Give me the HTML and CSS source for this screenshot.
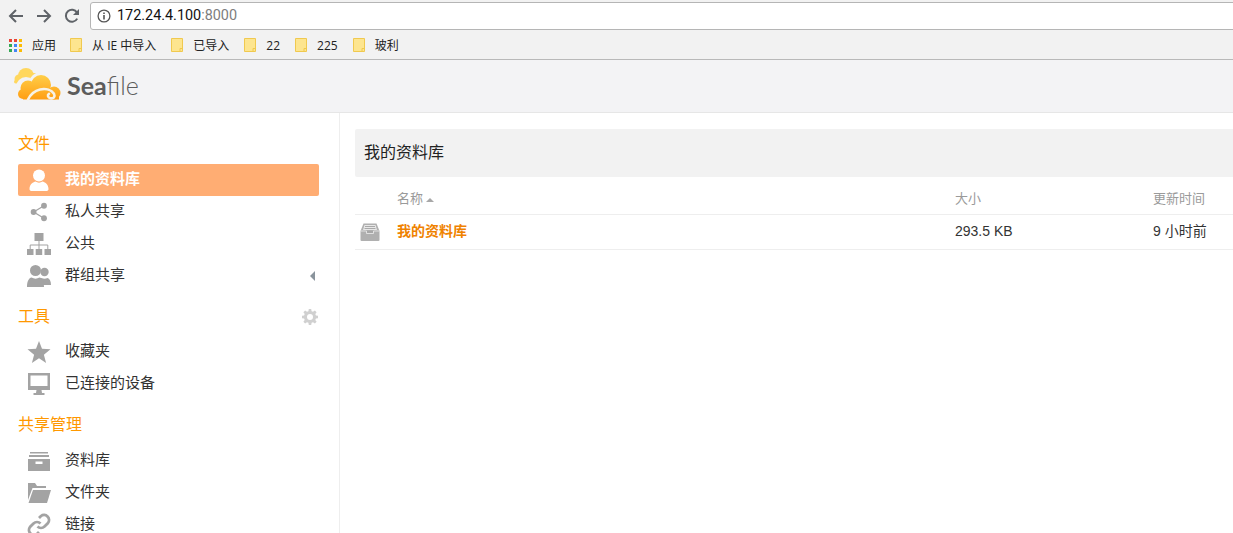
FILE: index.html
```html
<!DOCTYPE html>
<html lang="zh-CN">
<head>
<meta charset="utf-8">
<title>Seafile</title>
<link rel="stylesheet" href="styles.css">
</head>
<body>
<div class="chrome">
  <div class="toolbar">
    <svg class="tool-icon" viewBox="0 0 16 16"><path d="M15 8H2.500M8 2 2 8l6 6" fill="none" stroke="#5f6368" stroke-width="2"/></svg>
    <svg class="tool-icon" viewBox="0 0 16 16"><path d="M1 8h12.500M8 2l6 6-6 6" fill="none" stroke="#5f6368" stroke-width="2"/></svg>
    <svg class="tool-icon" viewBox="0 0 16 16"><path d="M13.200 10.600A6 6 0 1 1 13 4.600" fill="none" stroke="#5f6368" stroke-width="2"/><path d="M15 1v6H9z" fill="#5f6368"/></svg>
    <div class="omnibox">
      <svg class="info" viewBox="0 0 14 14"><circle cx="7" cy="7" r="5.900" fill="none" stroke="#555" stroke-width="1.300"/><path d="M6.200 3.400h1.600v1.500H6.200zM6.200 6h1.600v4.600H6.200z" fill="#555"/></svg>
      <span class="url">172.24.4.100<span class="port">:8000</span></span>
    </div>
  </div>
  <div class="bookmarks">
    <svg class="apps" viewBox="0 0 13 13">
      <rect x="0" y="0" width="3" height="3" fill="#ea4335"/><rect x="5" y="0" width="3" height="3" fill="#ea4335"/><rect x="10" y="0" width="3" height="3" fill="#fbbc05"/>
      <rect x="0" y="5" width="3" height="3" fill="#34a853"/><rect x="5" y="5" width="3" height="3" fill="#4285f4"/><rect x="10" y="5" width="3" height="3" fill="#fbbc05"/>
      <rect x="0" y="10" width="3" height="3" fill="#34a853"/><rect x="5" y="10" width="3" height="3" fill="#4285f4"/><rect x="10" y="10" width="3" height="3" fill="#fbbc05"/>
    </svg>
    <span class="bm apps-label">应用</span>
    <svg class="bm-file" viewBox="0 0 12 14"><path d="M.5.5h11v13H.5z" fill="#fde58f" stroke="#f0c94f"/><path d="M9 13.500v-3h2.500" fill="none" stroke="#f0c94f"/></svg>
    <span class="bm">从 IE 中导入</span>
    <svg class="bm-file" viewBox="0 0 12 14"><path d="M.5.5h11v13H.5z" fill="#fde58f" stroke="#f0c94f"/><path d="M9 13.500v-3h2.500" fill="none" stroke="#f0c94f"/></svg>
    <span class="bm">已导入</span>
    <svg class="bm-file" viewBox="0 0 12 14"><path d="M.5.5h11v13H.5z" fill="#fde58f" stroke="#f0c94f"/><path d="M9 13.500v-3h2.500" fill="none" stroke="#f0c94f"/></svg>
    <span class="bm">22</span>
    <svg class="bm-file" viewBox="0 0 12 14"><path d="M.5.5h11v13H.5z" fill="#fde58f" stroke="#f0c94f"/><path d="M9 13.500v-3h2.500" fill="none" stroke="#f0c94f"/></svg>
    <span class="bm">225</span>
    <svg class="bm-file" viewBox="0 0 12 14"><path d="M.5.5h11v13H.5z" fill="#fde58f" stroke="#f0c94f"/><path d="M9 13.500v-3h2.500" fill="none" stroke="#f0c94f"/></svg>
    <span class="bm">玻利</span>
  </div>
</div>

<header class="top">
  <svg class="logo" viewBox="0 0 52 34">
    <defs>
      <linearGradient id="cloud-a" gradientUnits="userSpaceOnUse" x1="0" y1="6" x2="0" y2="31"><stop offset="0" stop-color="#ffd04a"/><stop offset="1" stop-color="#ff9f14"/></linearGradient>
    </defs>
    <g fill="#ffd75e">
      <circle cx="13" cy="8" r="8"/><circle cx="6" cy="11" r="4.500"/><circle cx="21" cy="10" r="5"/><rect x="1" y="12" width="22" height="3.500" rx="1.700"/>
    </g>
    <circle cx="13" cy="19" r="10" fill="#f3f3f5"/>
    <circle cx="28" cy="16" r="12" fill="#f3f3f5"/>
    <g fill="url(#cloud-a)">
      <circle cx="28" cy="17" r="10"/><circle cx="15" cy="20" r="7.500"/><circle cx="10" cy="26" r="5"/><circle cx="41" cy="25" r="6.500"/>
      <rect x="10" y="24" width="36" height="7.500"/>
    </g>
    <path d="M15 31.500c2-4 5.500-8.500 12-10 6-1.300 11.500.5 14 4.300 1.500 3-.5 5-3.500 4.500-2.500-.5-3.500-3-1.500-4.500" fill="none" stroke="#f7f2e6" stroke-width="2.600" stroke-linecap="round"/>
  </svg>
  <span class="brand"><b>Sea</b>file</span>
</header>

<div class="layout">
  <aside class="side">
    <h3 class="side-title first">文件</h3>
    <ul class="nav">
      <li class="nav-item active">
        <svg class="nav-icon" viewBox="0 0 24 24"><circle cx="12" cy="7.500" r="6" fill="#fff"/><path d="M2.500 21c0-5 4-7 6-7.500 2 1.500 5 1.500 7 0 2 .5 6 2.500 6 7.500 0 1.500-1 2-2.500 2H5c-1.500 0-2.500-.5-2.500-2z" fill="#fff"/></svg>
        <span class="nav-label">我的资料库</span>
      </li>
      <li class="nav-item">
        <svg class="nav-icon small" viewBox="0 0 24 24"><circle cx="5.500" cy="12" r="3.500"/><circle cx="18" cy="4.500" r="3.500"/><circle cx="18" cy="19.500" r="3.500"/><path d="m5.500 12 12.500-7.500M5.500 12 18 19.500" stroke="#a3a3a3" stroke-width="1.600"/></svg>
        <span class="nav-label">私人共享</span>
      </li>
      <li class="nav-item">
        <svg class="nav-icon" viewBox="0 0 24 24"><rect x="7.500" y="1" width="9" height="8"/><rect x="0" y="17" width="6.500" height="6"/><rect x="8.700" y="17" width="6.500" height="6"/><rect x="17.500" y="17" width="6.500" height="6"/><path d="M12 9v8M3.200 17v-4h17.600v4" fill="none" stroke="#a3a3a3" stroke-width="1"/></svg>
        <span class="nav-label">公共</span>
      </li>
      <li class="nav-item">
        <svg class="nav-icon" viewBox="0 0 24 24"><circle cx="17.500" cy="8" r="4.200"/><path d="M14 21h10c0-4-1.500-6.500-3.500-7-2 1-4 1-6 0-1 .5-2 1-2.500 2 1.500 1 2 3 2 5z"/><circle cx="8.500" cy="6.500" r="5.500"/><path d="M0 23c0-6 2-9 4.500-9.500 2.500 1.500 5.500 1.500 8 0C15 14 17 17 17 23z"/></svg>
        <span class="nav-label">群组共享</span>
        <i class="caret"></i>
      </li>
    </ul>

    <div class="side-head">
      <h3 class="side-title">工具</h3>
      <svg class="gear" viewBox="0 0 16 16"><path d="M6.800 0h2.400l.4 2.200 1.400.6 1.900-1.300 1.700 1.700-1.300 1.800.6 1.400 2.100.4v2.400l-2.100.4-.6 1.400 1.300 1.800-1.700 1.700-1.900-1.300-1.400.6-.4 2.100H6.800l-.4-2.100-1.400-.6-1.900 1.300-1.700-1.700 1.300-1.800-.6-1.400L0 9.200V6.800l2.100-.4.600-1.400L1.400 3.200l1.700-1.700L5 2.800l1.400-.6zM8 5a3 3 0 1 0 0 6 3 3 0 0 0 0-6z" fill="#d0d0d0" fill-rule="evenodd"/></svg>
    </div>
    <ul class="nav">
      <li class="nav-item">
        <svg class="nav-icon" viewBox="0 0 24 24"><path d="m12 1 3 7.800 8.500.5-6.600 5.400 2.200 8.300L12 18.300 4.900 22.900l2.200-8.200L.5 9.300 9 8.800z"/></svg>
        <span class="nav-label">收藏夹</span>
      </li>
      <li class="nav-item">
        <svg class="nav-icon" viewBox="0 0 24 24"><path d="M1 1h22v17H14.500l.5 3h2.500v2h-11v-2H9l.5-3H1zm2.500 2.500v10.500h17V3.500z" fill-rule="evenodd"/></svg>
        <span class="nav-label">已连接的设备</span>
      </li>
    </ul>

    <h3 class="side-title manage">共享管理</h3>
    <ul class="nav">
      <li class="nav-item">
        <svg class="nav-icon" viewBox="0 0 24 24"><path d="M3 3h18v1.500H3zM2 6h20v2H2z"/><path d="M1 10h22v12H1zm7.500 2.500v2.500h7v-2.500z" fill-rule="evenodd"/></svg>
        <span class="nav-label">资料库</span>
      </li>
      <li class="nav-item">
        <svg class="nav-icon" viewBox="0 0 24 24"><path d="M1 2h7l2 3h9v2H5.500L1 19z"/><path d="M6 9h18l-4 13H1.500z"/></svg>
        <span class="nav-label">文件夹</span>
      </li>
      <li class="nav-item">
        <svg class="nav-icon" viewBox="0 0 24 24"><path d="M10.500 13.500a5 5 0 0 0 7 0l3.500-3.500a5 5 0 0 0-7-7l-2 2M13.500 10.500a5 5 0 0 0-7 0L3 14a5 5 0 0 0 7 7l2-2" fill="none" stroke="#a3a3a3" stroke-width="2.800"/></svg>
        <span class="nav-label">链接</span>
      </li>
    </ul>
  </aside>

  <main class="main">
    <h2 class="page-title">我的资料库</h2>
    <div class="row head">
      <span></span>
      <span>名称<i class="sort"></i></span>
      <span>大小</span>
      <span>更新时间</span>
    </div>
    <div class="row body">
      <svg class="lib-icon" viewBox="0 0 20 18"><path d="M3.500.5h13L19.500 8v9a1 1 0 0 1-1 1H1.500a1 1 0 0 1-1-1V8z" fill="#b0b0b0"/><path d="M4.500 2h11l1.500 5H3z" fill="#e8e8e8"/><path d="M5 3.500h10M4.500 5.500h11" stroke="#a8a8a8"/><path d="M.5 8h6v2.500h7V8h6" fill="#a8a8a8" stroke="#eee" stroke-width=".8"/></svg>
      <a class="lib-name">我的资料库</a>
      <span class="num">293.5 KB</span>
      <span class="when">9 小时前</span>
    </div>
  </main>
</div>
</body>
</html>
```
FILE: styles.css
```css
* { box-sizing: border-box; }
html, body { margin: 0; height: 100%; overflow: hidden; }
body {
  background: #fff;
  color: #333;
  font-family: "Liberation Sans", "Noto Sans CJK SC", sans-serif;
  display: flex;
  flex-direction: column;
}
ul { list-style: none; margin: 0; padding: 0; }
h2, h3 { margin: 0; font-weight: normal; }

.chrome { background: #f2f2f2; border-bottom: 1px solid #b9b9b9; height: 60px; flex: none; }
.toolbar { display: flex; align-items: center; height: 31px; padding-left: 8px; }
.tool-icon { width: 16px; height: 16px; margin-right: 12px; flex: none; }
.toolbar .tool-icon:nth-child(3) { margin-right: 10px; }
.omnibox {
  flex: 1;
  height: 28px;
  margin-right: -6px;
  background: #fff;
  border: 1px solid #b5b5b5;
  border-radius: 3px;
  display: flex;
  align-items: center;
  padding-left: 6px;
}
.info { width: 14px; height: 14px; margin-right: 6px; }
.url { font-family: "Roboto", sans-serif; font-size: 14.4px; color: #111; }
.port { color: #7d7d7d; }
.bookmarks {
  display: flex;
  align-items: center;
  height: 28px;
  padding-left: 9px;
  font-family: "Open Sans", "Noto Sans CJK SC", sans-serif;
  font-size: 12px;
  color: #222;
}
.apps { width: 13px; height: 13px; margin-right: 10px; flex: none; }
.bm-file { width: 12px; height: 14px; margin-right: 10px; flex: none; }
.bm { margin-right: 15px; }
.bm.apps-label { margin-right: 14px; }

.top {
  height: 53px;
  flex: none;
  background: #f3f3f5;
  border-bottom: 1px solid #e6e6e6;
  display: flex;
  align-items: center;
  padding: 0 0 3px 13px;
}
.logo { width: 52px; height: 34px; margin-right: 2px; }
.brand { font-family: "Lato", sans-serif; font-size: 25px; font-weight: 300; color: #5c5c5c; }
.brand b { font-weight: 700; }

.layout { flex: 1; display: flex; min-height: 0; overflow: hidden; }
.side {
  width: 340px;
  flex: none;
  border-right: 1px solid #eee;
  padding: 17px 20px 0 18px;
}
.side-title { font-size: 16px; line-height: 28px; color: #ff9800; }
.side-title.first { margin-bottom: 6px; }
.side-head { display: flex; align-items: center; justify-content: space-between; margin: 11px 1px 5px 0; }
.side-title.manage { margin: 11px 0 6px; }
.gear { width: 16px; height: 16px; margin-bottom: 1px; }
.nav-item {
  height: 32px;
  display: flex;
  align-items: center;
  padding-left: 9px;
  font-size: 15px;
  color: #333;
  border-radius: 2px;
}
.nav-label { padding-bottom: 6px; }
.nav-item.active { background: #ffad73; color: #fff; font-weight: 700; }
.nav-icon { width: 24px; height: 24px; margin-right: 14px; fill: #a3a3a3; flex: none; }
.nav-icon.small { width: 20px; height: 20px; margin: 0 16px 0 2px; }
.caret {
  margin-left: auto;
  margin-right: 4px;
  border-style: solid;
  border-width: 5px 5px 5px 0;
  border-color: transparent #8a949c transparent transparent;
}

.main { flex: 1; min-width: 0; padding: 16px 0 0 15px; }
.page-title {
  height: 48px;
  line-height: 48px;
  background: #f2f2f2;
  border-radius: 2px 0 0 2px;
  padding-left: 9px;
  font-size: 16px;
  color: #222;
}
.row {
  display: grid;
  grid-template-columns: 42px 558px 198px 1fr;
  align-items: center;
  border-bottom: 1px solid #eee;
}
.row.head { height: 38px; font-size: 13px; color: #9a9a9a; padding-top: 4px; }
.row.body { height: 35px; font-size: 14px; color: #333; }
.sort {
  display: inline-block;
  vertical-align: middle;
  margin-left: 3px;
  border-style: solid;
  border-width: 0 4px 4px;
  border-color: transparent transparent #a8a8a8;
}
.lib-icon { width: 20px; height: 18px; margin-left: 5px; }
.lib-name { color: #ef8200; font-weight: 700; padding-bottom: 4px; }
.num { padding-bottom: 2px; }
.when { padding-bottom: 4px; }
```
